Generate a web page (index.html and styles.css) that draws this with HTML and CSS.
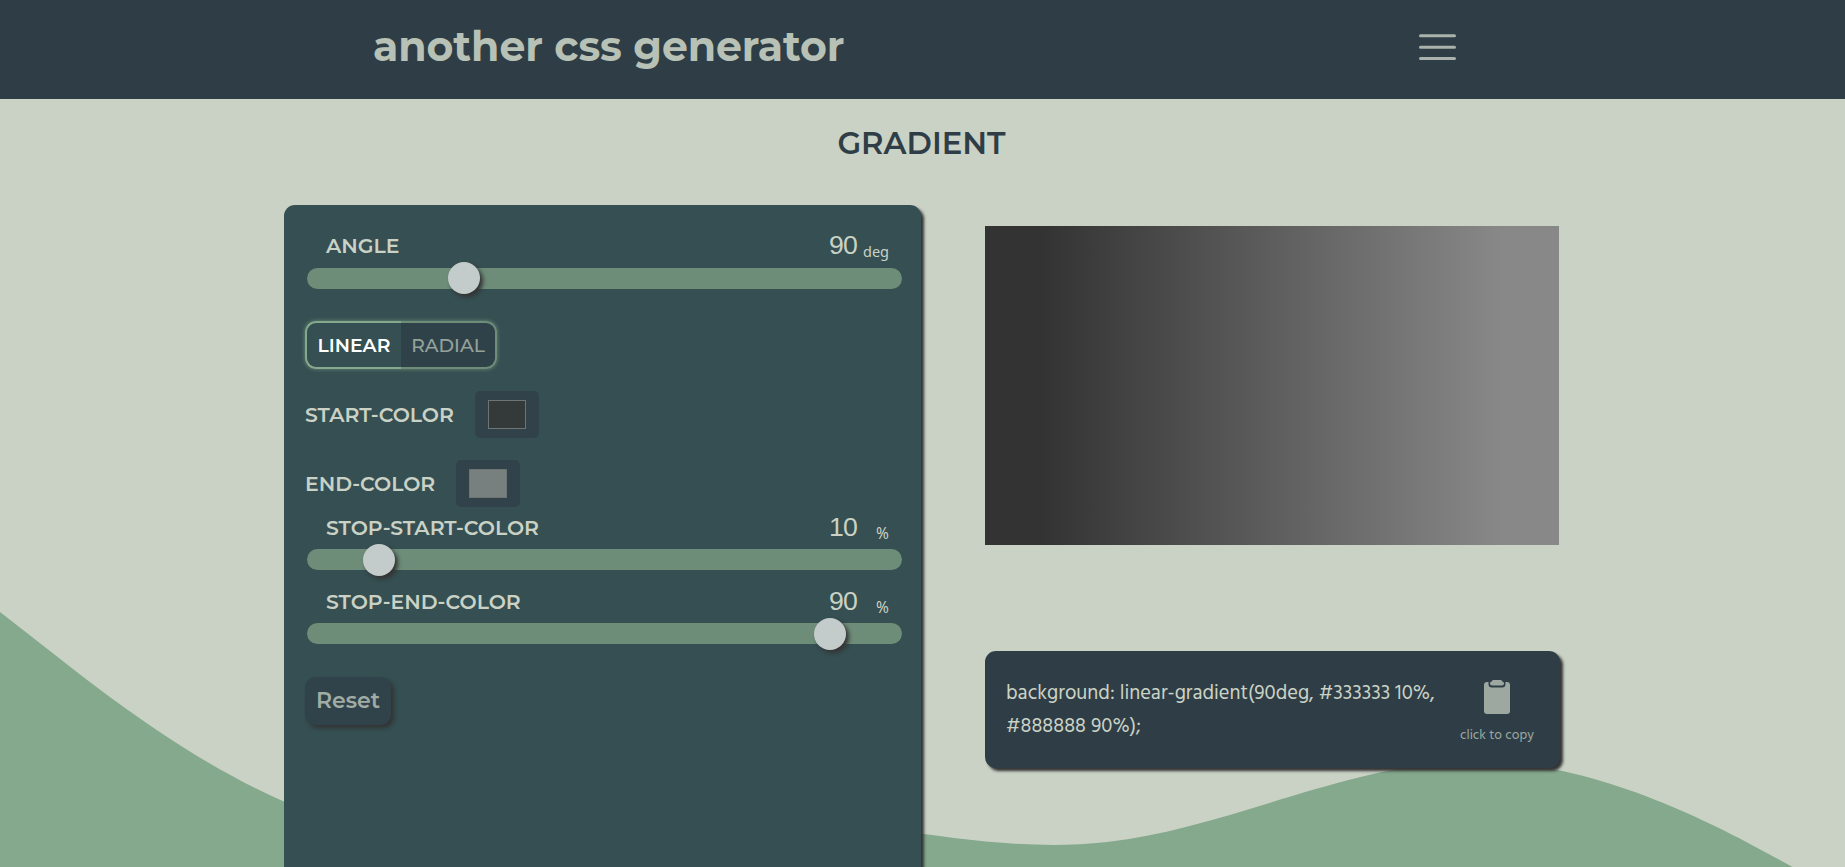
FILE: index.html
```html
<!DOCTYPE html>
<html lang="en">
<head>
<meta charset="utf-8">
<title>another css generator</title>
<link rel="stylesheet" href="styles.css">
</head>
<body>
<svg class="wave" viewBox="0 0 1845 867" aria-hidden="true"><path d="M0,612L61.5,660C123,708 246,803 369,830C492,857 615,815 738,815C861,815 984,856 1107,842C1230,828 1353,761 1476,761C1599,761 1722,828 1783.500,862L1845,896H0Z"/></svg>
<header class="header">
  <h1 class="brand"><span class="brand-text">another css generator</span></h1>
  <svg class="menu" viewBox="0 0 38 28"><path d="M1.500 2.800H35.500M1.500 14.200H35.500M1.500 25.500H35.500"/></svg>
</header>
<main>
  <h2 class="title"><span>GRADIENT</span></h2>
  <div class="columns">
    <section class="panel">
      <div class="field">
        <div class="row"><label class="angle">ANGLE</label><span class="value">90</span><span class="unit">deg</span></div>
        <div class="track t-angle"><i class="thumb"></i></div>
      </div>
      <div class="toggle"><button class="opt on">LINEAR</button><button class="opt off">RADIAL</button></div>
      <div class="color"><label class="start">START-COLOR</label><span class="well"><i class="swatch dark"></i></span></div>
      <div class="color second"><label class="end">END-COLOR</label><span class="well"><i class="swatch light"></i></span></div>
      <div class="field stop">
        <div class="row"><label class="sstart">STOP-START-COLOR</label><span class="value">10</span><span class="unit">%</span></div>
        <div class="track t-start"><i class="thumb"></i></div>
      </div>
      <div class="field stop">
        <div class="row"><label class="send">STOP-END-COLOR</label><span class="value">90</span><span class="unit">%</span></div>
        <div class="track t-end"><i class="thumb"></i></div>
      </div>
      <button class="reset">Reset</button>
    </section>
    <section class="output">
      <div class="preview"></div>
      <div class="code">
        <p class="css"><span class="l1">background: linear-gradient(90deg, #333333 10%,</span><br><span class="l2">#888888 90%);</span></p>
        <div class="copy">
          <svg class="clip" viewBox="0 0 26 34"><path class="sheet" d="M3 2H23a3 3 0 0 1 3 3V31a3 3 0 0 1-3 3H3a3 3 0 0 1-3-3V5a3 3 0 0 1 3-3Z"/><path class="gap" d="M4.500 0H21.500V4a3.500 3.500 0 0 1-3.500 3.500H8A3.500 3.500 0 0 1 4.500 4Z"/><path class="sheet" d="M9.500 0H16.500a1.500 1.500 0 0 1 1.500 1.300C19.500 1.800 20 2.700 20 3.500a2 2 0 0 1-2 2H8a2 2 0 0 1-2-2C6 2.700 6.500 1.800 8 1.300A1.500 1.500 0 0 1 9.500 0Z"/></svg>
          <span class="hint">click to copy</span>
        </div>
      </div>
    </section>
  </div>
</main>
</body>
</html>
```
FILE: styles.css
```css
*{box-sizing:border-box}
body{margin:0;height:867px;overflow:hidden;position:relative;background:#cad2c5;font-family:Montserrat,Inter,sans-serif;color:#cad2c5}
h1,h2,p{margin:0}
button{font:inherit;border:0;margin:0;padding:0}
.wave{position:absolute;left:0;top:0;width:1845px;height:867px;z-index:-1;fill:#84a98c}
.header{height:99px;background:#2f3e46;display:flex;justify-content:space-between;align-items:center;padding:0 388px 5px 373px}
.brand{font-size:41px;line-height:50px;font-weight:700;color:#b8c1b5;white-space:nowrap;letter-spacing:-.1px;padding-bottom:2px}
.menu{width:38px;height:28px;fill:none;stroke:#a9b3ab;stroke-width:3;stroke-linecap:round}
.title{height:106px;padding-top:24px;text-align:center;font-size:30.700px;line-height:40px;font-weight:600;color:#2f3e46}
.title span{margin-right:2px}
.columns{display:flex;align-items:flex-start;padding-left:284px;gap:64px}
.panel{width:637px;height:700px;background:#354f52;border-radius:11px;box-shadow:3px 3px 3px #333;padding:21px}
.row{display:flex;height:42px;padding-left:21px;padding-right:11px;align-items:center}
label{font-size:20.400px;font-weight:600;line-height:24px;white-space:nowrap}
.row label{flex:1;padding-bottom:2px}
.value{font:26.670px/30px "Liberation Sans",Arial,sans-serif;letter-spacing:-.8px;padding-bottom:5px}
.unit{width:32px;text-align:right;font:14.500px/20px "Noto Sans",sans-serif;padding-top:7px}
.track{width:595px;height:21px;margin-left:2px;border-radius:11px;background:#6d8d79;display:flex;align-items:center}
.thumb{width:32px;height:32px;margin-top:-1px;border-radius:50%;background:#c3cbcb;box-shadow:3px 3px 4px #333}
.t-angle .thumb{margin-left:141px}
.t-start .thumb{margin-left:56px}
.t-end .thumb{margin-left:507px}
.toggle{display:flex;width:192px;height:48px;margin-top:32px;border-radius:11px;background:#304249;box-shadow:0 0 4px #6d8d79}
.opt{font-size:18.800px;text-align:center}
.on{width:96px;color:#fff;font-weight:600;background:#354f52;border:2px solid #84a98c;border-right:0;border-radius:11px 0 0 11px}
.off{width:96px;color:#95a29c;font-weight:500;background:#304249;border:2px solid #6d8d79;border-left:0;border-radius:0 11px 11px 0}
.color{display:flex;align-items:center;gap:21px;height:47px;margin-top:22px}
.start{width:149px}.end{width:130px}
.well{width:64px;height:47px;border-radius:5px;background:#31424a;display:flex;align-items:center;justify-content:center}
.swatch{width:38px;height:29px;border:1px solid #6d7474}
.dark{background:#343a3a}.light{background:#777f7f}
.stop{margin-bottom:11px}
.stop .row label{padding-bottom:0}
.stop .value{padding-bottom:3px}
.stop .unit{padding-top:9px;font-size:15.500px}
.stop .thumb{margin-top:0}
.second{margin-top:22px}
.reset{width:86px;height:48px;margin-top:22px;border-radius:11px;background:#31434a;color:#a0aca4;font-size:22px;font-weight:600;box-shadow:3px 3px 4px #333;padding-bottom:1px}
.output{width:576px;padding-top:21px}
.preview{width:574px;height:319px;background:linear-gradient(90deg,#333 10%,#888 90%)}
.code{width:575px;height:117px;margin-top:106px;border-radius:11px;background:#2f3e46;box-shadow:3px 3px 3px #333;padding:24px 25px 20px 21px;display:flex;justify-content:space-between}
.css{font:20.400px/33px Hind,"Noto Sans",sans-serif;white-space:nowrap;padding-top:2px}
.copy{display:flex;flex-direction:column;align-items:center;width:76px;padding-top:5px}
.clip{width:26px;height:34px}
.sheet{fill:#9da8a1}.gap{fill:#2f3e46}
.hint{font:13.700px/18px Hind,"Noto Sans",sans-serif;color:#9da8a1;white-space:nowrap;margin-top:13px}
```
